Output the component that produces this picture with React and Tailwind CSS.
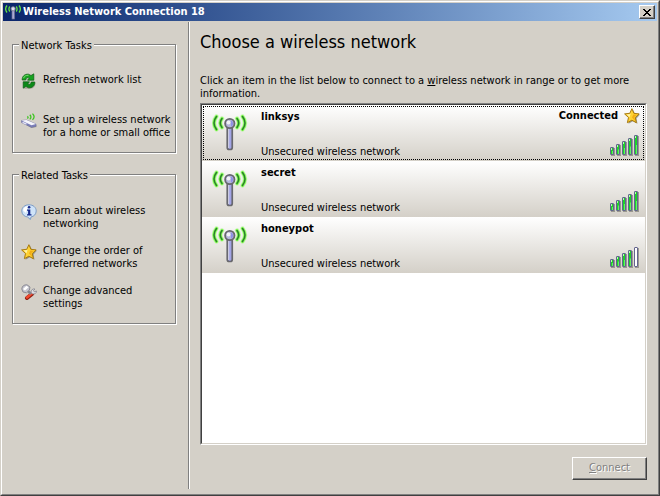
import { useState } from "react";

const networks = [
  { name: "linksys", security: "Unsecured wireless network", strength: 5, connected: true },
  { name: "secret", security: "Unsecured wireless network", strength: 5, connected: false },
  { name: "honeypot", security: "Unsecured wireless network", strength: 4, connected: false },
];

const waves =
  "M4.500 2.500Q-.5 9 4.500 15.500M10 4.500Q6.500 9 10 13.500M30.500 2.500Q35.500 9 30.500 15.500M25 4.500Q28.500 9 25 13.500";

function AntennaIcon({ className }) {
  return (
    <svg viewBox="0 0 36 38" className={className} aria-hidden="true" fill="none">
      <path d={waves} stroke="#b6f59a" strokeWidth="4.500" strokeLinecap="round" opacity="0.6" />
      <path d={waves} stroke="#7dfb4c" strokeWidth="3" strokeLinecap="round" />
      <path d={waves} stroke="#2a7f2c" strokeWidth="1.500" strokeLinecap="round" />
      <rect x="15.250" y="12" width="5" height="23.500" rx="2" fill="#a3a4e6" stroke="#68686e" strokeWidth="1.700" />
      <path d="M16.700 15v19" stroke="#d4d4e2" />
      <circle cx="17.800" cy="9.500" r="4.700" fill="#b4b6dc" stroke="#68686e" strokeWidth="1.800" />
      <path d="M19 6.300a3.500 3.500 0 0 1 0 6.400z" fill="#8f90e6" />
      <circle cx="16.500" cy="8.500" r="1.900" fill="#f2f2f6" />
    </svg>
  );
}

function TitleIcon({ className }) {
  return (
    <svg viewBox="0 0 16 16" className={className} aria-hidden="true" fill="none">
      <path
        d="M2 1.500Q-.8 5 2 8.500M4.800 2.500Q3 5 4.800 7.500M14 1.500Q16.800 5 14 8.500M11.200 2.500Q13 5 11.200 7.500"
        stroke="#62e043"
        strokeWidth="1.300"
      />
      <rect x="7" y="6" width="2.500" height="9" fill="#a9a9d8" stroke="#6f6f8c" strokeWidth="0.700" />
      <circle cx="8.100" cy="4.800" r="2.100" fill="#dcdcf0" stroke="#7c7c92" strokeWidth="0.900" />
    </svg>
  );
}

function StarIcon({ className }) {
  return (
    <svg viewBox="0 0 16 16" className={className} aria-hidden="true">
      <path d="M9 1.500l2 4.500 5 .5-3.500 4 1 5.300-4.500-2.500-4.500 2.500 1-5.300z" fill="#77735f" opacity="0.7" />
      <path
        d="M7.900.7l2 4.600 5.200.6-3.800 3.600 1 5.200-4.400-2.500-4.500 2.500 1.100-5.200L.6 5.900l5.200-.6z"
        fill="#ffd231"
        stroke="#a87a10"
        strokeWidth="1"
        strokeLinejoin="round"
      />
      <path d="M7.800 2.300L6.400 6.100l-3.800.5 2.900 2.600z" fill="#fff3a6" />
      <path d="M8 9.500l3.200 3.600-.9-4 2.500-2.400-3.400-.2z" fill="#f2ac13" />
    </svg>
  );
}

function RefreshIcon({ className }) {
  return (
    <svg viewBox="0 0 16 16" className={className} aria-hidden="true">
      <path d="M14.500 10c0 4-3 6.300-7 6L3 16V15z" fill="#77735f" opacity="0.35" />
      <g stroke="#0b5a12" strokeWidth="0.700" strokeLinejoin="round">
        <path d="M1.200 7C1 3.500 3.500.8 7.500 1.200L10 2.500 12.800.8v6.400H6.500L8.300 5C6.500 4 5 5 4.800 7z" fill="#17a321" />
        <path d="M13.800 9c.2 3.500-2.300 6.200-6.300 5.800L5 13.500l-2.800 1.700V8.800h6.300L6.700 11c1.800 1 3.300 0 3.500-2z" fill="#0c8a18" />
      </g>
      <path d="M2.500 5.200C3.300 3 5 2.200 7.500 2.300" fill="none" stroke="#7be070" />
    </svg>
  );
}

function RouterIcon({ className }) {
  return (
    <svg viewBox="0 0 16 16" className={className} aria-hidden="true" fill="none">
      <path d="M6.500 3.200q1.200 1.200 0 2.400M8.800 1.800q2.300 2.200 0 4.600M11.500.6q3.200 3.200 0 6.300" stroke="#3cc41f" strokeWidth="1.300" />
      <path d="M1 9.500l9.500 5.500 5-1v-2z" fill="#77735f" opacity="0.5" />
      <path d="M.5 7.500l5-.5 9.500 4v2.400l-4.500 1L.5 9.600z" fill="#7b7eb8" stroke="#6a6c98" strokeWidth="0.500" />
      <path d="M.5 7.500l5-.5 9.500 4-4.500 1.200z" fill="#f6f6fc" />
      <path d="M1.500 9.300l4 1.800" stroke="#e4e4f6" strokeWidth="1.300" />
    </svg>
  );
}

function InfoIcon({ className }) {
  return (
    <svg viewBox="0 0 16 16" className={className} aria-hidden="true">
      <path
        d="M8 .8c4.200 0 7.200 2.600 7.200 6.200 0 3.200-2.200 5.400-5.200 6l-.6 2.500L6.600 13C3.200 12.600.8 10.300.8 7 .8 3.400 3.800.8 8 .8z"
        fill="#cfe3f8"
        stroke="#7d9cc4"
        strokeWidth="1"
      />
      <path d="M7 2C4 2.200 2.200 4 2.200 6.600L5 9z" fill="#fff" />
      <circle cx="8.100" cy="3.300" r="1.300" fill="#14288c" />
      <path d="M6 5.500h3.300v4.700h1.200v1.300H6v-1.300h1.100V6.800H6z" fill="#14288c" />
    </svg>
  );
}

function SettingsIcon({ className }) {
  return (
    <svg viewBox="0 0 16 16" className={className} aria-hidden="true">
      <path d="M6 14l5-4" stroke="#8c1c10" strokeWidth="4" strokeLinecap="round" />
      <path d="M6 13.400l4.500-3.600" stroke="#f4492e" strokeWidth="2.600" strokeLinecap="round" />
      <path d="M10 8.500c0-2.500 1.500-4 4-3.500l-1.500 1.500.8 1.300L15.500 7c0 2.300-1.700 3.300-4 3z" fill="#dcdce2" stroke="#85858f" strokeWidth="0.800" />
      <path d="M6 6l4 4" stroke="#85858f" strokeWidth="2.500" />
      <path d="M.8 5C1 2 3 .7 6 .8l3 2.200-.6 3L5.500 8.800 2 8z" fill="#c4c4ce" stroke="#85858f" strokeWidth="0.900" />
      <path d="M2 5L5.500 1.800l2 1.400L4 6.500z" fill="#fff" />
    </svg>
  );
}

function SignalBars({ strength }) {
  return (
    <svg viewBox="0 0 30 22" className="h-[22px] w-[30px]" role="img" aria-label={`Signal strength ${strength} of 5`}>
      {[0, 1, 2, 3, 4].map((i) => {
        const h = 8 + i * 3;
        const x = i * 6;
        const y = 20 - h;
        return (
          <g key={i}>
            <rect x={x + 1} y={y + 1} width="4" height={h} fill="#8b887f" opacity="0.8" />
            <rect x={x + 0.5} y={y + 0.5} width="3" height={h - 1} rx="0.500" fill={i < strength ? "#1fc91f" : "#ffffff"} stroke="#64648f" />
            {i < strength && <rect x={x + 1} y={y + 1} width="2" height={h - 2} fill="#1fd02a" />}
            {i < strength && <rect x={x + 1} y={y + 1} width="1" height="2" fill="#b8ffb0" />}
            {i < strength && <rect x={x + 2} y={y + h / 2} width="1" height={h / 2 - 1} fill="#62f562" />}
          </g>
        );
      })}
    </svg>
  );
}

function TaskGroup({ title, className, children }) {
  return (
    <section className={`border border-[#808080] px-2 shadow-[1px_1px_0_#fff,inset_1px_1px_0_#fff] ${className}`}>
      <h2 className="-ml-0.5 -mt-1.5 w-fit bg-[#d4d0c8] px-0.5 leading-[13px]">{title}</h2>
      {children}
    </section>
  );
}

function Task({ icon: Icon, children }) {
  return (
    <li>
      <a href="#" className="flex gap-1.5 whitespace-nowrap">
        <Icon className="size-4 shrink-0" />
        <span className="leading-[13px]">{children}</span>
      </a>
    </li>
  );
}

export default function App() {
  const [selected, setSelected] = useState("linksys");

  return (
    <div className="flex min-h-screen cursor-default flex-col border border-b-[#404040] border-l-[#d4d0c8] border-r-[#404040] border-t-[#d4d0c8] bg-[#d4d0c8] font-['DejaVu_Sans_Condensed','DejaVu_Sans',sans-serif] text-[11px] text-black">
      <div className="flex grow flex-col border border-b-[#808080] border-l-white border-r-[#808080] border-t-white p-px">
        <header className="flex h-[18px] items-center bg-linear-to-r from-[#0a246a] to-[#a6caf0] px-0.5">
          <TitleIcon className="size-4" />
          <h1 className="grow pl-0.5 font-bold leading-[14px] text-white">Wireless Network Connection 18</h1>
          <button
            type="button"
            aria-label="Close"
            className="flex h-[14px] w-4 items-center justify-center border border-b-[#404040] border-l-white border-r-[#404040] border-t-white bg-[#d4d0c8] shadow-[inset_-1px_-1px_0_#808080]"
          >
            <svg viewBox="0 0 8 7" className="h-[7px] w-2" shapeRendering="crispEdges" aria-hidden="true">
              <path d="M0 0h2v1h1v1h2V1h1V0h2v1H7v1H6v1H5v1h1v1h1v1h1v1H6V6H5V5H3v1H2v1H0V6h1V5h1V4h1V3H2V2H1V1H0z" fill="#000" />
            </svg>
          </button>
        </header>

        <div className="flex grow pt-px">
          <nav className="w-[185px] shrink-0 py-[22px] pl-[9px] pr-3">
            <TaskGroup title="Network Tasks" className="h-[109px]">
              <ul className="flex flex-col gap-6 pt-[21px]">
                <Task icon={RefreshIcon}>Refresh network list</Task>
                <Task icon={RouterIcon}>
                  Set up a wireless network
                  <br />
                  for a home or small office
                </Task>
              </ul>
            </TaskGroup>
            <TaskGroup title="Related Tasks" className="mt-[21px] h-[150px]">
              <ul className="flex flex-col gap-[14px] pt-[22px]">
                <Task icon={InfoIcon}>
                  Learn about wireless
                  <br />
                  networking
                </Task>
                <Task icon={StarIcon}>
                  Change the order of
                  <br />
                  preferred networks
                </Task>
                <Task icon={SettingsIcon}>
                  Change advanced
                  <br />
                  settings
                </Task>
              </ul>
            </TaskGroup>
          </nav>

          <div className="mb-1 w-0.5 shrink-0 border-l border-r border-l-[#808080] border-r-white" />

          <main className="flex min-w-0 grow flex-col pb-[13px] pl-2.5 pr-2.5 pt-2">
            <h2 className="text-[18px] leading-6">Choose a wireless network</h2>
            <p className="pb-[3px] pt-5 leading-[13px]">
              Click an item in the list below to connect to a <u>w</u>ireless network in range or to get more{" "}
              <span>information.</span>
            </p>

            <div className="flex grow flex-col border border-b-white border-l-[#808080] border-r-white border-t-[#808080]">
              <ul className="grow border border-b-[#d4d0c8] border-l-[#404040] border-r-[#d4d0c8] border-t-[#404040] bg-white">
                {networks.map((n) => (
                  <li key={n.name} className="bg-linear-to-b from-white to-[#d4d0c8] p-px">
                    <button
                      type="button"
                      aria-pressed={selected === n.name}
                      onClick={() => setSelected(n.name)}
                      className={`flex h-[54px] w-full border border-dotted pl-2 text-left outline-none ${
                        selected === n.name ? "border-black" : "border-transparent"
                      }`}
                    >
                      <AntennaIcon className="mt-[7px] h-[38px] w-9 shrink-0" />
                      <span className="flex grow flex-col justify-between pb-px pl-[13px] pt-[3px] leading-[13px]">
                        <span className="font-bold">{n.name}</span>
                        <span>{n.security}</span>
                      </span>
                      <span className="flex flex-col items-end justify-between pb-0.5 pr-[3px] pt-px">
                        <span className="flex h-4 items-center gap-1.5 font-bold">
                          {n.connected && (
                            <>
                              Connected
                              <StarIcon className="size-4" />
                            </>
                          )}
                        </span>
                        <SignalBars strength={n.strength} />
                      </span>
                    </button>
                  </li>
                ))}
              </ul>
            </div>

            <button
              type="button"
              disabled
              className="mt-3 h-[23px] w-[75px] self-end border border-b-[#404040] border-l-white border-r-[#404040] border-t-white text-[#808080] shadow-[inset_-1px_-1px_0_#808080] [text-shadow:1px_1px_0_#fff]"
            >
              <u>C</u>onnect
            </button>
          </main>
        </div>
      </div>
    </div>
  );
}
